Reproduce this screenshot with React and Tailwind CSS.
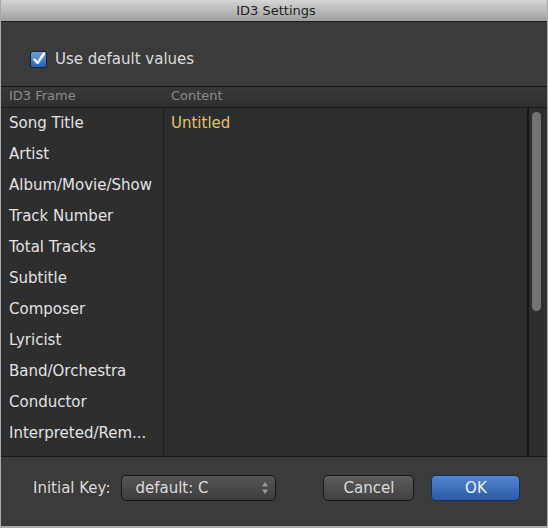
import React from 'react';

const fields = [
  'Song Title',
  'Artist',
  'Album/Movie/Show',
  'Track Number',
  'Total Tracks',
  'Subtitle',
  'Composer',
  'Lyricist',
  'Band/Orchestra',
  'Conductor',
  'Interpreted/Rem...',
];

export default function App() {
  return (
    <div
      className="w-[548px] h-[528px] flex flex-col bg-[#3b3b3b] border-x border-b-2 border-[#a9a9a9] overflow-hidden"
      style={{ fontFamily: '"DejaVu Sans", Verdana, sans-serif' }}
    >
      {/* title bar */}
      <div className="h-[22px] shrink-0 flex items-center justify-center bg-gradient-to-b from-[#d6d6d6] to-[#9f9f9f] border-b border-[#1c1c1c] text-[13px] text-[#1e1e1e] pl-[4px]">
        ID3 Settings
      </div>

      {/* checkbox area */}
      <div className="h-[64px] shrink-0 flex items-center pl-[29px] pt-[10px]">
        <div className="w-[17px] h-[17px] rounded-[3px] border border-[#14233d] bg-gradient-to-b from-[#6d9fe0] to-[#2a5fb7] flex items-center justify-center">
          <svg width="14" height="14" viewBox="0 0 14 14">
            <path d="M2.5 7.5 L5.5 11 L12 1.5" fill="none" stroke="#ffffff" strokeWidth="2.4" strokeLinecap="round" strokeLinejoin="round" />
          </svg>
        </div>
        <span className="ml-[8px] text-[15px] text-[#dcdcdc]">Use default values</span>
      </div>

      {/* table header */}
      <div className="h-[22px] shrink-0 flex items-center border-y border-[#161616] bg-gradient-to-b from-[#383838] to-[#303030] text-[13px] text-[#8c8c8c] pb-[2px]">
        <div className="w-[163px] pl-[8px]">ID3 Frame</div>
        <div className="pl-[7px]">Content</div>
      </div>

      {/* table body */}
      <div className="h-[349px] shrink-0 flex border-b border-[#161616]">
        <div className="w-[163px] shrink-0 bg-[#2e2e2f] border-r border-[#1c1c1c] flex flex-col">
          {fields.map((f) => (
            <div key={f} className="h-[31px] shrink-0 flex items-center pl-[8px] text-[15px] text-[#e2e2e2] whitespace-nowrap">
              {f}
            </div>
          ))}
        </div>
        <div className="flex-1 bg-[#2c2d2f] flex flex-col">
          <div className="h-[31px] flex items-center pl-[7px] text-[15px] text-[#e2c267]">Untitled</div>
        </div>
        <div className="w-[20px] shrink-0 bg-[#2e2e2e] border-l-2 border-[#141414] pt-[4px] pl-[3px]">
          <div className="w-[9px] h-[199px] rounded-full bg-[#737373]" />
        </div>
      </div>

      {/* bottom bar */}
      <div className="flex-1 flex items-center pb-[7px]">
        <span className="ml-[32px] text-[15px] text-[#dadada]">Initial Key:</span>
        <div className="ml-[11px] w-[155px] h-[26px] rounded-[5px] border border-[#161616] bg-gradient-to-b from-[#555555] to-[#3d3d3d] flex items-center pl-[13px] pr-[6px] text-[15px] text-[#dcdcdc]">
          <span className="flex-1">default: C</span>
          <svg width="8" height="14" viewBox="0 0 8 14">
            <path d="M4 1 L7 5.5 L1 5.5 Z" fill="#9a9a9a" />
            <path d="M4 13 L7 8.5 L1 8.5 Z" fill="#9a9a9a" />
          </svg>
        </div>
        <div className="ml-[47px] w-[91px] h-[26px] rounded-[5px] border border-[#161616] bg-gradient-to-b from-[#5c5c5c] to-[#414141] flex items-center justify-center text-[15px] text-[#dcdcdc]">
          Cancel
        </div>
        <div className="ml-[17px] w-[89px] h-[26px] rounded-[5px] border border-[#1a3058] bg-gradient-to-b from-[#5186d0] to-[#2b5aa6] flex items-center justify-center text-[15px] text-[#eef2f8]">
          OK
        </div>
      </div>
    </div>
  );
}
